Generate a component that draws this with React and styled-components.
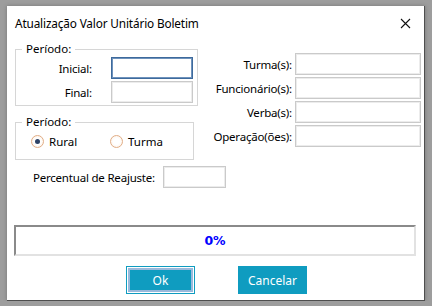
import React, { useState } from 'react';
import styled, { createGlobalStyle } from 'styled-components';

const GlobalStyle = createGlobalStyle`
    html, body {
        margin : 0;
        padding : 0;
        background : #9d9d9d;
    }
    body {
        font-family : "Noto Sans", "Open Sans", sans-serif;
        font-size : 11.5px;
        color : #000;
    }
    * { box-sizing : border-box; }
`;

const Window = styled.div`
    margin : 6px 0 0 7px;
    width : 418px;
    height : 295px;
    background : #fff;
    border-right : 1px solid #4e4e4e;
    border-bottom : 1px solid #4e4e4e;
    box-shadow : 0 0 4px rgba(0, 0, 0, 0.25);
    display : flex;
    flex-direction : column;
`;

const TitleBar = styled.div`
    height : 34px;
    flex : none;
    display : flex;
    align-items : center;
    justify-content : space-between;
    padding : 0 12px 0 8px;
`;

const Title = styled.span`
    font-size : 11.8px;
    letter-spacing : -0.15px;
`;

const CloseBtn = styled.button`
    width : 14px;
    height : 14px;
    padding : 0;
    border : 0;
    background : none;
    display : flex;
    align-items : center;
    justify-content : center;
`;

const Main = styled.div`
    display : flex;
    padding : 2px 0 0 8px;
`;

const LeftCol = styled.div`
    width : 187px;
    flex : none;
    display : flex;
    flex-direction : column;
`;

const GroupBox = styled.fieldset`
    margin : 0 0 ${p => p.$mb || 0}px 0;
    width : ${p => p.$w}px;
    border : 1px solid #d6d6d6;
    padding : ${p => p.$pad};
    min-width : 0;
`;

const Legend = styled.legend`
    margin-left : 6px;
    padding : 0 4px;
    line-height : 14px;
`;

const FieldGrid = styled.div`
    display : grid;
    grid-template-columns : ${p => p.$cols};
    column-gap : ${p => p.$gap}px;
    row-gap : 2px;
    align-items : center;
`;

const Label = styled.label`
    text-align : right;
    white-space : nowrap;
    letter-spacing : -0.2px;
    width : ${p => p.$w ? `${p.$w}px` : 'auto'};
    flex : none;
`;

const TextBox = styled.input`
    width : ${p => p.$w || 82}px;
    height : 22px;
    margin : 0;
    padding : 0 3px;
    border : 1px solid ${p => p.$focus ? '#3e6a9c' : '#cacaca'};
    box-shadow : inset 0 0 0 1px ${p => p.$focus ? '#6e92bc' : '#ececec'};
    outline : none;
    font : inherit;
    background : #fff;
`;

const RadioRow = styled.div`
    display : flex;
    align-items : center;
    height : 20px;
    padding-left : 15px;
`;

const RadioItem = styled.label`
    display : flex;
    align-items : center;
    gap : 5px;
    width : ${p => p.$w}px;
    cursor : default;
`;

const RadioCircle = styled.span`
    width : 13px;
    height : 13px;
    border-radius : 50%;
    border : 1px solid #e1ad86;
    background : radial-gradient(circle, #fff 40%, #fbeee2 100%);
    display : flex;
    align-items : center;
    justify-content : center;
    flex : none;
    &::after {
        content : '';
        width : 5px;
        height : 5px;
        border-radius : 50%;
        background : #2d4266;
        display : ${p => p.$checked ? 'block' : 'none'};
    }
`;

const PercentRow = styled.div`
    display : flex;
    align-items : center;
    gap : 8px;
    margin-top : 6px;
`;

const RightCol = styled.div`
    margin-top : 11px;
    width : 219px;
`;

const Progress = styled.div`
    margin : 37px 0 0 7px;
    width : 402px;
    height : 31px;
    border-top : 2px solid #8a8a8a;
    border-left : 2px solid #8a8a8a;
    border-right : 2px solid #e2e2e2;
    border-bottom : 2px solid #e2e2e2;
    display : flex;
    align-items : center;
    justify-content : center;
`;

const ProgressText = styled.span`
    font-family : "DejaVu Sans", "Liberation Sans", sans-serif;
    font-weight : bold;
    font-size : 12.5px;
    color : #0000ff;
`;

const Buttons = styled.div`
    display : flex;
    justify-content : center;
    gap : 43px;
    margin-top : 10px;
    padding-left : 2px;
`;

const Button = styled.button`
    width : 69px;
    height : 28px;
    background : #0f9cc0;
    color : #fff;
    font : inherit;
    font-size : 12px;
    border : 1px solid #0f9cc0;
    box-shadow : ${p => p.$default ? 'inset 0 0 0 1px #fff, inset 0 0 0 3px #9ab9dc' : 'none'};
    padding : 0;
`;

const rightFields = ['Turma(s):', 'Funcionário(s):', 'Verba(s):', 'Operação(ões):'];

function App() {
    const [tipo, setTipo] = useState('rural');

    return (
        <>
            <GlobalStyle />
            <Window>
                <TitleBar>
                    <Title>Atualização Valor Unitário Boletim</Title>
                    <CloseBtn>
                        <svg width="11" height="11" viewBox="0 0 11 11">
                            <path d="M1 1 L10 10 M10 1 L1 10" stroke="#111" strokeWidth="1.1" />
                        </svg>
                    </CloseBtn>
                </TitleBar>
                <Main>
                    <LeftCol>
                        <GroupBox $w={183} $mb={9} $pad="1px 3px 2px 0">
                            <Legend>Período:</Legend>
                            <FieldGrid $cols="76px 82px" $gap={19}>
                                <Label>Inicial:</Label>
                                <TextBox $focus />
                                <Label>Final:</Label>
                                <TextBox />
                            </FieldGrid>
                        </GroupBox>
                        <GroupBox $w={179} $pad="2px 0 8px 0">
                            <Legend>Período:</Legend>
                            <RadioRow>
                                <RadioItem $w={79} onClick={() => setTipo('rural')}>
                                    <RadioCircle $checked={tipo === 'rural'} />
                                    Rural
                                </RadioItem>
                                <RadioItem $w={80} onClick={() => setTipo('turma')}>
                                    <RadioCircle $checked={tipo === 'turma'} />
                                    Turma
                                </RadioItem>
                            </RadioRow>
                        </GroupBox>
                        <PercentRow>
                            <Label $w={140}>Percentual de Reajuste:</Label>
                            <TextBox $w={63} />
                        </PercentRow>
                    </LeftCol>
                    <RightCol>
                        <FieldGrid $cols="1fr 126px" $gap={3}>
                            {rightFields.map((f) => (
                                <React.Fragment key={f}>
                                    <Label>{f}</Label>
                                    <TextBox $w={126} />
                                </React.Fragment>
                            ))}
                        </FieldGrid>
                    </RightCol>
                </Main>
                <Progress>
                    <ProgressText>0%</ProgressText>
                </Progress>
                <Buttons>
                    <Button $default>Ok</Button>
                    <Button>Cancelar</Button>
                </Buttons>
            </Window>
        </>
    );
}

export default App;
